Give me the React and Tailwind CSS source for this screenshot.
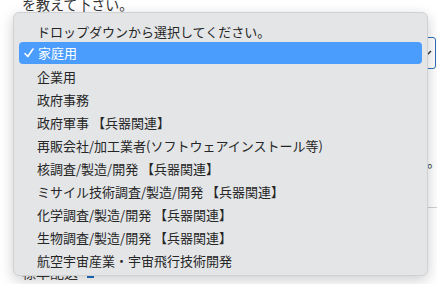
import React from "react";

const items = [
  "企業用",
  "政府事務",
  "政府軍事 【兵器関連】",
  "再販会社/加工業者(ソフトウェアインストール等)",
  "核調査/製造/開発 【兵器関連】",
  "ミサイル技術調査/製造/開発 【兵器関連】",
  "化学調査/製造/開発 【兵器関連】",
  "生物調査/製造/開発 【兵器関連】",
  "航空宇宙産業・宇宙飛行技術開発",
];

const font = { fontFamily: '"Noto Sans CJK JP", "Noto Sans", sans-serif' };

export default function App() {
  return (
    <div
      className="relative w-[437px] h-[284px] overflow-hidden bg-white text-[#333]"
      style={font}
    >
      {/* background page */}
      <div className="flex flex-col pl-[22px] mt-[-6px]">
        <div className="text-[14px] leading-[20px]">を教えて下さい。</div>
        <div className="flex justify-end mt-[23px] mr-[1px]">
          <div className="w-[300px] h-[32px] border border-[#2f6fba] rounded-[3px] flex items-center justify-end pr-[3px]">
            <svg width="6" height="6" viewBox="0 0 6 6">
              <path d="M1 5 L5 1" stroke="#333" strokeWidth="1.5" />
            </svg>
          </div>
        </div>
        <div className="flex justify-end text-[14px] leading-[20px] mt-[82px] mr-[-4px]">
          <span>下さい「。</span>
        </div>
        <div className="h-px bg-[#d0d0d0] mt-[36px] ml-[200px]" />
        <div className="flex items-center gap-[9px] mt-[54px] text-[14px] leading-[20px]">
          <span>標準配送</span>
          <span className="w-[7px] h-[12px] bg-[#1d6fc4] text-white text-[8px] leading-[12px] text-center">i</span>
        </div>
      </div>

      {/* dropdown menu */}
      <div className="absolute left-[13px] top-[12px] w-[415px] h-[264px] rounded-[6px] bg-[#e3e5e6] border border-[#cfd1d2] shadow-[0_4px_14px_rgba(0,0,0,0.2)] pt-[6px] px-[5px] text-[13px] text-[#262626]">
        <div className="h-[23px] flex items-center pl-[18px] pt-[2px]">
          ドロップダウンから選択してください。
        </div>
        <div className="h-[22px] mb-[1px] flex items-center rounded-[4px] bg-[#4b9dfd] text-white">
          <svg className="ml-[5px] mr-[4px]" width="10" height="10" viewBox="0 0 10 10">
            <path d="M1 5.5 L3.8 8.5 L9 1" fill="none" stroke="white" strokeWidth="1.6" strokeLinecap="round" strokeLinejoin="round" />
          </svg>
          <span>家庭用</span>
        </div>
        {items.map((t) => (
          <div key={t} className="h-[23px] flex items-center pl-[18px]">
            {t}
          </div>
        ))}
      </div>
    </div>
  );
}
